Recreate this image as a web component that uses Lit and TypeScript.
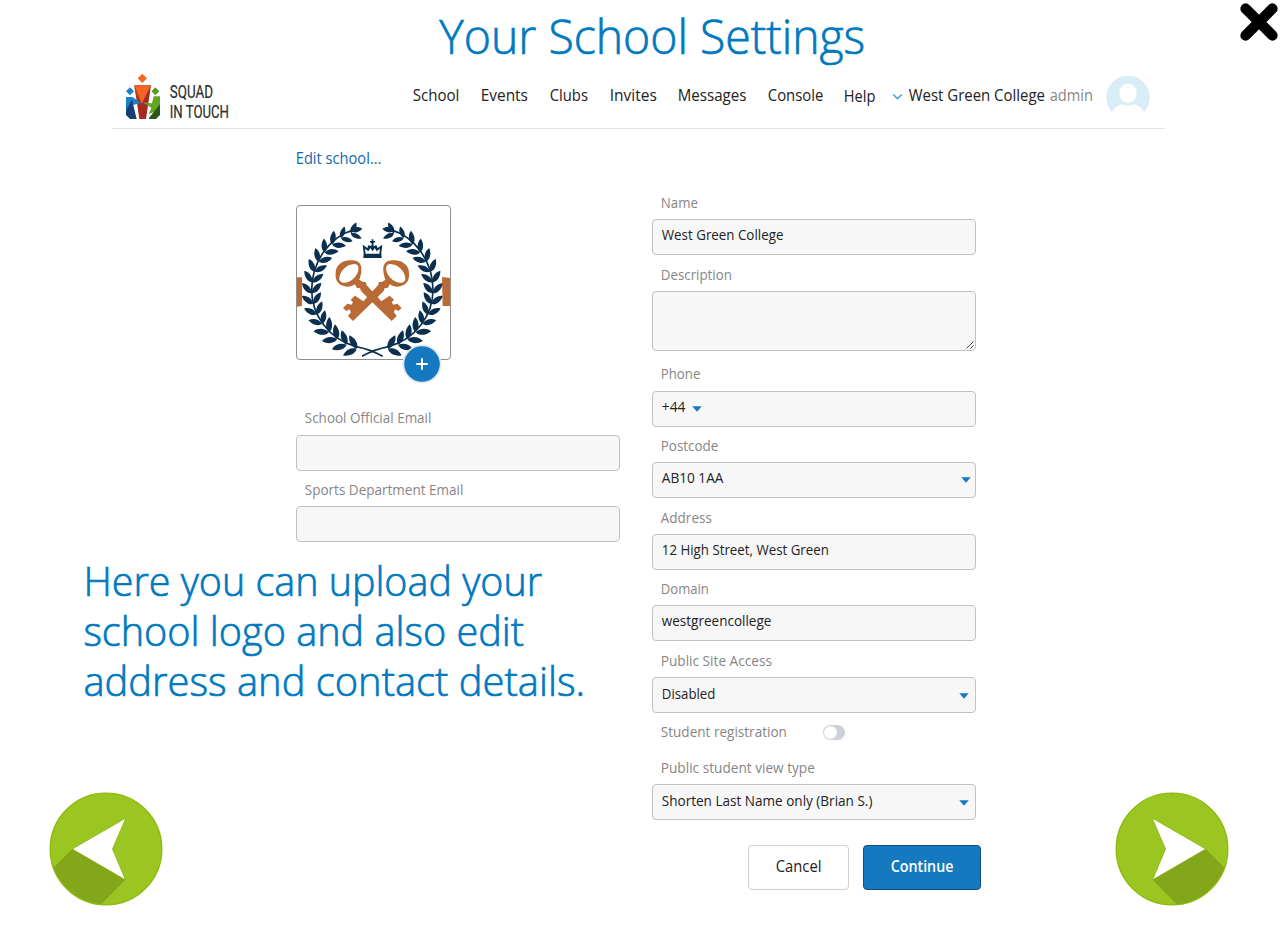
import { LitElement, html, svg, css, nothing } from "lit";
import { customElement } from "lit/decorators.js";

interface Field {
  label: string;
  labelWidth: number;
  gap: number;
  labelHeight?: number;
  value?: string;
  valueWidth?: number;
  baseline?: number;
  kind?: "area" | "phone" | "combo" | "select" | "toggle";
}

/** A single line of type fitted to a given width. */
const line = (text: string, width: number, size: number, height: number, baseline: number, cls = "") => html`
  <svg class="line ${cls}" width=${width} height=${height}>
    <text x=${-0.015 * size} y=${baseline} font-size=${size}
      textLength=${width + 0.04 * size} lengthAdjust="spacingAndGlyphs">${text}</text>
  </svg>`;

const caret = html`<svg class="caret" width="10" height="6" viewBox="0 0 10 6"><path d="M.3 .3H9.7L5 5.8Z" fill="#1578c0" /></svg>`;

const LEFT: Field[] = [
  { label: "School Official Email", labelWidth: 126, gap: 0, labelHeight: 23 },
  { label: "Sports Department Email", labelWidth: 158, gap: 13 },
];

const RIGHT: Field[] = [
  { label: "Name", labelWidth: 36.5, gap: 0, value: "West Green College", valueWidth: 121 },
  { label: "Description", labelWidth: 70.5, gap: 14, kind: "area" },
  { label: "Phone", labelWidth: 39, gap: 17, labelHeight: 23, value: "+44", valueWidth: 23, kind: "phone" },
  { label: "Postcode", labelWidth: 57, gap: 13, value: "AB10 1AA", valueWidth: 61, kind: "combo" },
  { label: "Address", labelWidth: 50.5, gap: 14, value: "12 High Street, West Green", valueWidth: 166.5 },
  { label: "Domain", labelWidth: 47.5, gap: 13, value: "westgreencollege", valueWidth: 109 },
  { label: "Public Site Access", labelWidth: 110.5, gap: 14, value: "Disabled", valueWidth: 53, baseline: 21, kind: "select" },
  { label: "Student registration", labelWidth: 125.5, gap: 13, kind: "toggle" },
  { label: "Public student view type", labelWidth: 153.5, gap: 14, value: "Shorten Last Name only (Brian S.)", valueWidth: 210, baseline: 21, kind: "select" },
];

const NAV: [string, number, number][] = [
  ["School", 46, 0], ["Events", 46.5, 22.5], ["Clubs", 37.5, 22.5], ["Invites", 46.5, 22],
  ["Messages", 68, 22], ["Console", 55, 21.5],
];

@customElement("school-crest")
class SchoolCrest extends LitElement {
  static styles = css`
    :host { display: block; }
    svg { display: block; }
  `;

  private branch() {
    const leaf = "M0 0C7 -11 25 -12 40 -2C28 10 10 9 0 0Z";
    const leaves = [];
    for (let i = 0; i < 15; i++) {
      const deg = 15 + i * 10.3;
      const a = (deg * Math.PI) / 180;
      const x = 277 - 182 * Math.sin(a);
      const y = 300 + 182 * Math.cos(a);
      const s = i > 12 ? 0.9 : i < 4 ? 1.14 : 1.04;
      leaves.push(svg`
        <path d=${leaf} transform="translate(${x} ${y}) rotate(${deg + 141}) scale(${s})" />
        <path d=${leaf} transform="translate(${x} ${y}) rotate(${deg + 224}) scale(${s} ${-s})" />`);
    }
    return svg`
      <path d="M308 499C285 486 260 476 228 470C146 447 95 375 95 300C95 215 150 138 222 120" fill="none" stroke="#0b2f4e" stroke-width="5" />
      ${leaves}
      <path d="M212 124C220 109 234 108 247 116C236 128 224 130 212 124Z" />`;
  }

  private key() {
    return svg`
      <path fill-rule="evenodd" d="M167 250C166 229 184 211 211 211C235 208 247 223 244 243C243 253 241 261 238 269L247 275L257 276L260 286L273 300L290 318L304 334L329 317L342 329L335 337L340 344L352 341L365 354L355 363L346 358L341 366L350 378L335 393L263 323L243 303L240 295L230 293L225 283C213 292 197 292 185 286C171 280 165 266 167 250ZM178 268C181 285 207 280 223 263C239 246 241 222 222 222C201 223 177 243 178 268Z" />`;
  }

  render() {
    return html`<svg width="153" height="153" viewBox="51 48 459 459">
      <g fill="#b96a35">
        <path d="M51 262H66V348L51 350Z" /><path d="M486 261L510 264V348H488Z" />
        ${this.key()}<g transform="translate(554 0) scale(-1 1)">${this.key()}</g>
      </g>
      <g fill="#0b2f4e">
        ${this.branch()}<g transform="translate(554 0) scale(-1 1)">${this.branch()}</g>
        <path fill-rule="evenodd" d="M250 204L251 190L248 164L262 174L266 165L274 169L275 160L270 157V153H275V148H280V153H285V157L280 160L281 169L289 165L293 174L307 164L304 190L305 204ZM257 191H298L300 176L290 184L284 174L278 184L271 174L265 184L255 176Z" />
      </g>
    </svg>`;
  }
}

@customElement("arrow-button")
class ArrowButton extends LitElement {
  static properties = { flip: { type: Boolean } };
  declare flip: boolean;
  static styles = css`
    :host { display: block; width: 114px; height: 114px; }
    svg { display: block; }
  `;
  render() {
    return html`<svg width="114" height="114" viewBox="0 0 342 342">
      <g transform=${this.flip ? "translate(342 0) scale(-1 1)" : ""}>
        <circle cx="171" cy="171" r="168" fill="#9bc520" />
        <path d="M70 171L13 228A168 168 0 0 0 155 339L229 263Z" fill="#83a61a" />
        <circle cx="171" cy="171" r="167.5" fill="none" stroke="#8ebb11" stroke-width="4" />
        <path d="M70 171L230 79L190 171L229 263" fill="none" stroke="#8ab51a" stroke-width="2" />
        <path d="M72 171L228 81L189 171L227 261Z" fill="#fff" />
      </g>
    </svg>`;
  }
}

@customElement("app-root")
class AppRoot extends LitElement {
  static styles = css`
    :host { display: block; width: 1280px; height: 939px; overflow: hidden; background: #fff; font-family: "Open Sans", "Noto Sans", sans-serif; }
    * { box-sizing: border-box; }
    svg { display: block; flex: none; }
    .line { overflow: visible; fill: #222; }
    .light { fill: #0079bf; stroke: #0079bf; stroke-width: 0.7px; font-weight: 300; }
    .muted { fill: #868686; }
    .link { fill: #1569ab; }
    .bold { fill: #fff; font-weight: 600; }
    .brand-type { font-family: Roboto, sans-serif; fill: #2c2c2c; stroke: #2c2c2c; stroke-width: 0.2px; }
    .top { display: flex; height: 66px; padding-left: 440px; justify-content: space-between; }
    .close { margin: 2px 1px 0 0; }
    .header { display: flex; height: 63px; width: 1053px; margin-left: 112px; padding-left: 13px; border-bottom: 1px solid #e4e4e4; }
    .brand { display: flex; width: 287.5px; gap: 9px; }
    .brand-mark { margin-top: 7px; }
    .brand-lines { padding-top: 18px; }
    .nav { display: flex; padding-top: 17px; }
    .nav-item { flex: none; }
    .help { margin: 1px 0 0 21.5px; }
    .chev { margin: 9.5px 6px 0 17px; }
    .role { margin-left: 5px; }
    .avatar { margin: 10px 0 0 13.5px; }
    .main { display: grid; grid-template-columns: 652px 329px 1fr; height: 810px; }
    .left { display: flex; flex-direction: column; }
    .panel { width: 324px; margin-left: 296px; padding-top: 19px; }
    .logo-card { position: relative; width: 155px; height: 155px; margin: 33px 0 52px; border: 1px solid #8e8e8e; border-radius: 4px; }
    .crest-clip { overflow: hidden; border-radius: 3px; }
    .plus { position: absolute; left: 105px; top: 138px; width: 40px; height: 40px; }
    .label { display: flex; padding-left: 9px; }
    .box { display: flex; width: 324px; height: 36px; padding-left: 9px; border: 1px solid #c2c2c2; border-radius: 4px; background: #f7f7f7; }
    .area { height: 60px; justify-content: flex-end; align-items: flex-end; }
    .grip { margin: 0 1px 1px 0; }
    .phone .caret { margin: 14px 0 0 7px; }
    .combo, .select { justify-content: space-between; }
    .combo .caret { margin: 14px 4px 0 0; }
    .select .caret { margin: 15px 6px 0 0; }
    .toggle { width: 22px; height: 15px; margin-left: 36.5px; margin-top: -1px; padding: 1px; border-radius: 8px; background: #ccd0d8; }
    .knob { width: 13px; height: 13px; border-radius: 50%; background: #fff; }
    .note { margin: 19px 0 0 84px; }
    .prev { margin: 81px 0 0 48.7px; }
    .form { padding-top: 68px; }
    .actions { display: flex; gap: 14px; justify-content: flex-end; margin-top: 25px; }
    .btn { display: flex; justify-content: center; height: 45px; width: 101px; border: 1px solid #d0d0d0; border-radius: 4px; background: #fff; }
    .primary { width: 118px; border-color: #124c80; background: #1579c0; }
    .right { display: flex; padding: 663px 0 0 133.5px; }
  `;

  private field(f: Field) {
    const toggle = f.kind === "toggle";
    return html`
      <div class="field" style="margin-top:${f.gap}px">
        <div class="label">
          ${line(f.label, f.labelWidth, 15, f.labelHeight ?? 22, 11, "muted")}
          ${toggle ? html`<div class="toggle"><div class="knob"></div></div>` : nothing}
        </div>
        ${toggle ? nothing : html`<div class="box ${f.kind ?? ""}">
          ${f.value ? line(f.value, f.valueWidth!, 15, 30, f.baseline ?? 20) : nothing}
          ${f.kind === "phone" || f.kind === "combo" || f.kind === "select" ? caret : nothing}
          ${f.kind === "area" ? html`<svg class="grip" width="8" height="8"><path d="M.5 7.5L7.5 .5M4.5 7.5L7.5 4.5" stroke="#444" fill="none" /></svg>` : nothing}
        </div>`}
      </div>`;
  }

  private brandMark() {
    return html`<svg class="brand-mark" width="36" height="47" viewBox="75 36 108 141">
      <path d="M127 38L141 52L127 66L113 52Z" fill="#f26a24" />
      <path d="M90 79L102 91L90 103L78 91Z" fill="#1a80c8" />
      <path d="M166 79L178 91L166 103L154 91Z" fill="#5a9a24" />
      <path d="M103 73H153L138 174H118Z" fill="#a52a22" />
      <path d="M103 73H153L125 128Z" fill="#f26522" />
      <path d="M103 73L106 96L125 128Z" fill="#c93c22" />
      <path d="M78 108H97L124 126L98 132L78 150Z" fill="#1a80c8" />
      <path d="M78 148L96 116L110 174H90L78 162Z" fill="#173f73" />
      <path d="M180 106H161L156 127L127 124L154 140L146 160L168 150L180 148Z" fill="#65a524" />
      <path d="M180 130L146 172L148 174H168L180 162Z" fill="#28591c" />
    </svg>`;
  }

  render() {
    return html`
      <div class="top">
        ${line("Your School Settings", 424, 48, 66, 53.5, "light")}
        <svg class="close" width="40" height="40" viewBox="0 0 40 40"><path d="M6.6 6.6L33.4 33.4M33.4 6.6L6.6 33.4" stroke="#000" stroke-width="10.5" stroke-linecap="round" /></svg>
      </div>
      <div class="header">
        <div class="brand">
          ${this.brandMark()}
          <div class="brand-lines">
            ${line("SQUAD", 42.5, 18.5, 20, 14, "brand-type")}
            ${line("IN TOUCH", 58.5, 18.5, 20, 14, "brand-type")}
          </div>
        </div>
        <div class="nav">
          ${NAV.map(([name, w, gap]) => html`<div class="nav-item" style="margin-left:${gap}px">${line(name, w, 17, 26, 18)}</div>`)}
          <div class="help">${line("Help", 31, 17, 26, 18)}</div>
          <svg class="chev" width="11" height="8" viewBox="0 0 11 8"><path d="M1.2 1.5L5.5 5.5L9.8 1.5" stroke="#4aa3dc" stroke-width="1.7" fill="none" /></svg>
          ${line("West Green College", 135.5, 17, 26, 18)}
          <div class="role">${line("admin", 42.5, 17, 26, 18, "muted")}</div>
        </div>
        <svg class="avatar" width="44" height="36" viewBox="0 0 132 108">
          <path d="M18 108A65 65 0 1 1 114 108C108 96 98 88 84 84C74 90 58 90 48 84C34 88 24 96 18 108Z" fill="#d8edf6" />
          <ellipse cx="66" cy="52" rx="26" ry="29" fill="#fff" />
        </svg>
      </div>
      <div class="main">
        <div class="left">
          <div class="panel">
            ${line("Edit school...", 85, 17, 24, 16, "link")}
            <div class="logo-card">
              <div class="crest-clip"><school-crest></school-crest></div>
              <svg class="plus" width="40" height="40" viewBox="0 0 40 40"><circle cx="20" cy="20" r="19.5" fill="#e6e8ea" /><circle cx="20" cy="20" r="17.8" fill="#1579c0" /><path d="M14.3 20H25.7M20 14.3V25.7" stroke="#fff" stroke-width="2" /></svg>
            </div>
            ${LEFT.map((f) => this.field(f))}
          </div>
          <div class="note">
            ${line("Here you can upload your", 457, 41, 50, 35, "light")}
            ${line("school logo and also edit", 439, 41, 50, 35, "light")}
            ${line("address and contact details.", 500, 41, 50, 35, "light")}
          </div>
          <arrow-button class="prev"></arrow-button>
        </div>
        <div class="form">
          ${RIGHT.map((f) => this.field(f))}
          <div class="actions">
            <div class="btn">${line("Cancel", 45, 17, 40, 26)}</div>
            <div class="btn primary">${line("Continue", 62, 17, 40, 26, "bold")}</div>
          </div>
        </div>
        <div class="right"><arrow-button flip></arrow-button></div>
      </div>`;
  }
}
